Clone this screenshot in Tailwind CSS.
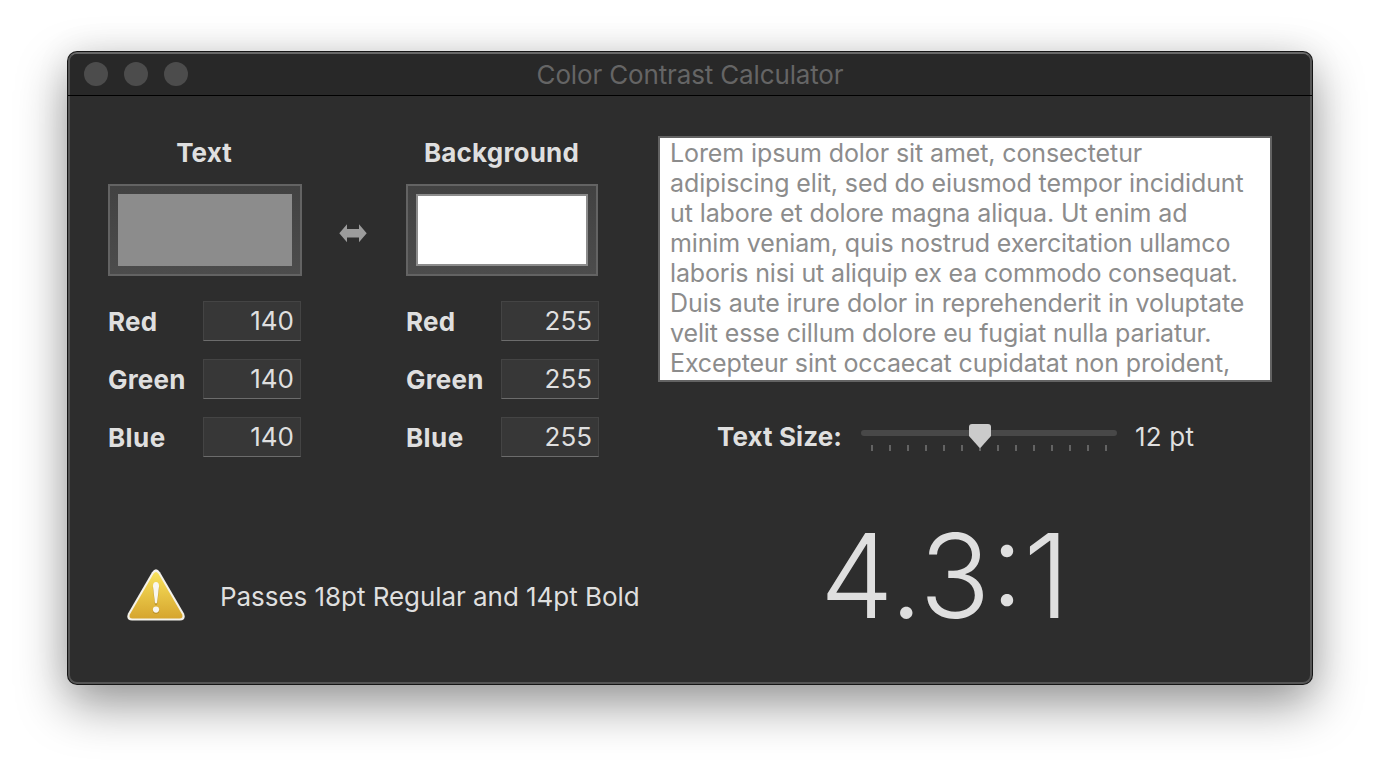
<!DOCTYPE html>
<html lang="en">
<head>
<meta charset="utf-8">
<title>Color Contrast Calculator</title>
<script src="https://cdn.jsdelivr.net/npm/@tailwindcss/browser@4"></script>
</head>
<body class="bg-white h-[768px] overflow-hidden pt-[51px] pl-[67px] font-['Inter','Liberation_Sans',sans-serif] text-[#dfdfdf] text-[26px] leading-[30px]">
<main class="w-[1246px] h-[634px] rounded-[10px] bg-[#151515] p-px shadow-[0_20px_50px_rgba(0,0,0,0.4),0_0_36px_rgba(0,0,0,0.07)]">
<div class="h-full rounded-[9px] border-2 border-[#555555] border-t-[#686868] bg-[#2d2d2d] flex flex-col">
  <header class="h-[41px] shrink-0 rounded-t-[7px] bg-[#282828] grid grid-cols-[1fr_auto_1fr] items-center">
    <div class="flex gap-4 pl-[14px] pb-px">
      <span class="size-6 rounded-full bg-[#4c4c4c]"></span><span class="size-6 rounded-full bg-[#4c4c4c]"></span><span class="size-6 rounded-full bg-[#4c4c4c]"></span>
    </div>
    <h1 class="text-[#656565] whitespace-nowrap tracking-[-0.15px]">Color Contrast Calculator</h1>
    <div></div>
  </header>
  <div class="h-px shrink-0 -mx-[2px] bg-black"></div>
  <div class="flex pl-[38px] pt-[40px]">
    <section class="w-[194px]">
      <h2 class="text-center font-bold h-[34px] leading-[34px] pr-[2px] tracking-[0.1px]">Text</h2>
      <div class="mt-[14px] h-[92px] border-2 border-[#636363] bg-linear-to-b from-[#424242] to-[#4c4c4c] p-2"><div class="h-full bg-[#8c8c8c]"></div></div>
      <div class="mt-[25px] flex flex-col gap-[18px]">
        <div class="flex justify-between items-center h-10"><b class="pt-0.5 tracking-[0.2px]">Red</b><div class="w-[98px] h-10 mr-px bg-[#373737] border border-[#444] border-b-[#6c6c6c] pr-[6px] leading-[38px] text-right">140</div></div>
        <div class="flex justify-between items-center h-10"><b class="pt-0.5 tracking-[0.2px]">Green</b><div class="w-[98px] h-10 mr-px bg-[#373737] border border-[#444] border-b-[#6c6c6c] pr-[6px] leading-[38px] text-right">140</div></div>
        <div class="flex justify-between items-center h-10"><b class="pt-0.5 tracking-[0.4px]">Blue</b><div class="w-[98px] h-10 mr-px bg-[#373737] border border-[#444] border-b-[#6c6c6c] pr-[6px] leading-[38px] text-right">140</div></div>
      </div>
    </section>
    <div class="w-[104px] pt-[87px] pl-[37px]">
      <svg class="block" width="28" height="20" viewBox="0 0 28 20"><path d="M0.300 10.300L8 1.300V6H20V1.300L27.700 10.300L20 19.300V14.500H8V19.300Z" fill="#9c9c9c"/></svg>
    </div>
    <section class="w-[193px]">
      <h2 class="text-center font-bold h-[34px] leading-[34px] pr-[2px] tracking-[0.2px]">Background</h2>
      <div class="mt-[14px] w-[192px] h-[92px] border-2 border-[#636363] bg-linear-to-b from-[#424242] to-[#4c4c4c] p-2"><div class="h-full bg-white border-2 border-[#8c8c8c]"></div></div>
      <div class="mt-[25px] flex flex-col gap-[18px]">
        <div class="flex justify-between items-center h-10"><b class="pt-0.5 tracking-[0.2px]">Red</b><div class="w-[98px] h-10 bg-[#373737] border border-[#444] border-b-[#6c6c6c] pr-[6px] leading-[38px] text-right">255</div></div>
        <div class="flex justify-between items-center h-10"><b class="pt-0.5 tracking-[0.2px]">Green</b><div class="w-[98px] h-10 bg-[#373737] border border-[#444] border-b-[#6c6c6c] pr-[6px] leading-[38px] text-right">255</div></div>
        <div class="flex justify-between items-center h-10"><b class="pt-0.5 tracking-[0.4px]">Blue</b><div class="w-[98px] h-10 bg-[#373737] border border-[#444] border-b-[#6c6c6c] pr-[6px] leading-[38px] text-right">255</div></div>
      </div>
    </section>
    <section class="ml-[59px] w-[614px]">
      <div class="h-[246px] bg-white border-2 border-[#636363] text-[#8c8c8c] text-[25px] leading-[30px] pl-[10px] overflow-hidden whitespace-nowrap">
        <p class="tracking-[-0.1px]">Lorem ipsum dolor sit amet, consectetur</p>
        <p class="tracking-[-0.1px]">adipiscing elit, sed do eiusmod tempor incididunt</p>
        <p class="tracking-[-0.1px]">ut labore et dolore magna aliqua. Ut enim ad</p>
        <p class="tracking-[-0.15px]">minim veniam, quis nostrud exercitation ullamco</p>
        <p class="tracking-[-0.16px]">laboris nisi ut aliquip ex ea commodo consequat.</p>
        <p class="tracking-[-0.09px]">Duis aute irure dolor in reprehenderit in voluptate</p>
        <p class="tracking-[-0.12px]">velit esse cillum dolore eu fugiat nulla pariatur.</p>
        <p class="tracking-[-0.12px]">Excepteur sint occaecat cupidatat non proident,</p>
      </div>
      <div class="mt-[34px] flex items-center h-10 pl-[59px]">
        <b class="w-[144px] whitespace-nowrap pt-px tracking-[0.1px]">Text Size:</b>
        <svg class="block shrink-0" width="256" height="40" viewBox="861 416 256 40">
          <rect x="861" y="430" width="256" height="6" rx="3" fill="#484848"/>
          <path d="M872 445v6M890 445v6M908 445v6M926 445v6M944 445v6M962 445v6M980 445v6M998 445v6M1016 445v6M1034 445v6M1052 445v6M1070 445v6M1088 445v6M1106 445v6" stroke="#636363" stroke-width="2"/>
          <path d="M972 424H988Q991 424 991 427V436L981 447.2Q980 448.2 979 447.2L969 436V427Q969 424 972 424Z" fill="#cbcbcb"/>
        </svg>
        <span class="ml-[18px] whitespace-nowrap pt-px tracking-[0.2px]">12 pt</span>
      </div>
    </section>
  </div>
  <footer class="flex pl-[56px] pt-[48px]">
    <svg class="block mt-[62px] shrink-0" width="60" height="56" viewBox="0 0 60 56">
      <defs><linearGradient id="g" x1="0" y1="0" x2="0" y2="1"><stop offset="0" stop-color="#f8e25c"/><stop offset="1" stop-color="#d6a52e"/></linearGradient></defs>
      <path d="M26 5.200Q30 -0.500 34 5.200L58 46.500Q60.500 53.200 54 53.500H6Q-0.500 53.200 2 46.500Z" fill="#f4f2ea"/>
      <path d="M27.500 6.800Q30 3 32.500 6.800L56.200 47.500Q57.500 51.300 53.500 51.500H6.500Q2.500 51.300 3.800 47.500Z" fill="url(#g)"/>
      <path d="M30 15.500Q33.400 15.500 33.200 20L31.200 36Q30 38.500 28.800 36L26.800 20Q26.600 15.500 30 15.500Z" fill="#8a6410" opacity=".45" transform="translate(0 1)"/>
      <circle cx="30" cy="43.600" r="3.200" fill="#8a6410" opacity=".45"/>
      <path d="M30 15Q33.200 15 33 19.500L31.100 35.500Q30 37.500 28.900 35.500L27 19.500Q26.800 15 30 15Z" fill="#f8f6ee"/><circle cx="30" cy="42.600" r="3.100" fill="#f8f6ee"/>
    </svg>
    <p class="ml-[34px] mt-[77px] w-[600px] whitespace-nowrap tracking-[-0.05px]">Passes 18pt Regular and 14pt Bold</p>
    <div class="h-[142px] leading-[142px] text-[117px] font-[350] whitespace-nowrap">4.3:1</div>
  </footer>
</div>
</main>
</body>
</html>
